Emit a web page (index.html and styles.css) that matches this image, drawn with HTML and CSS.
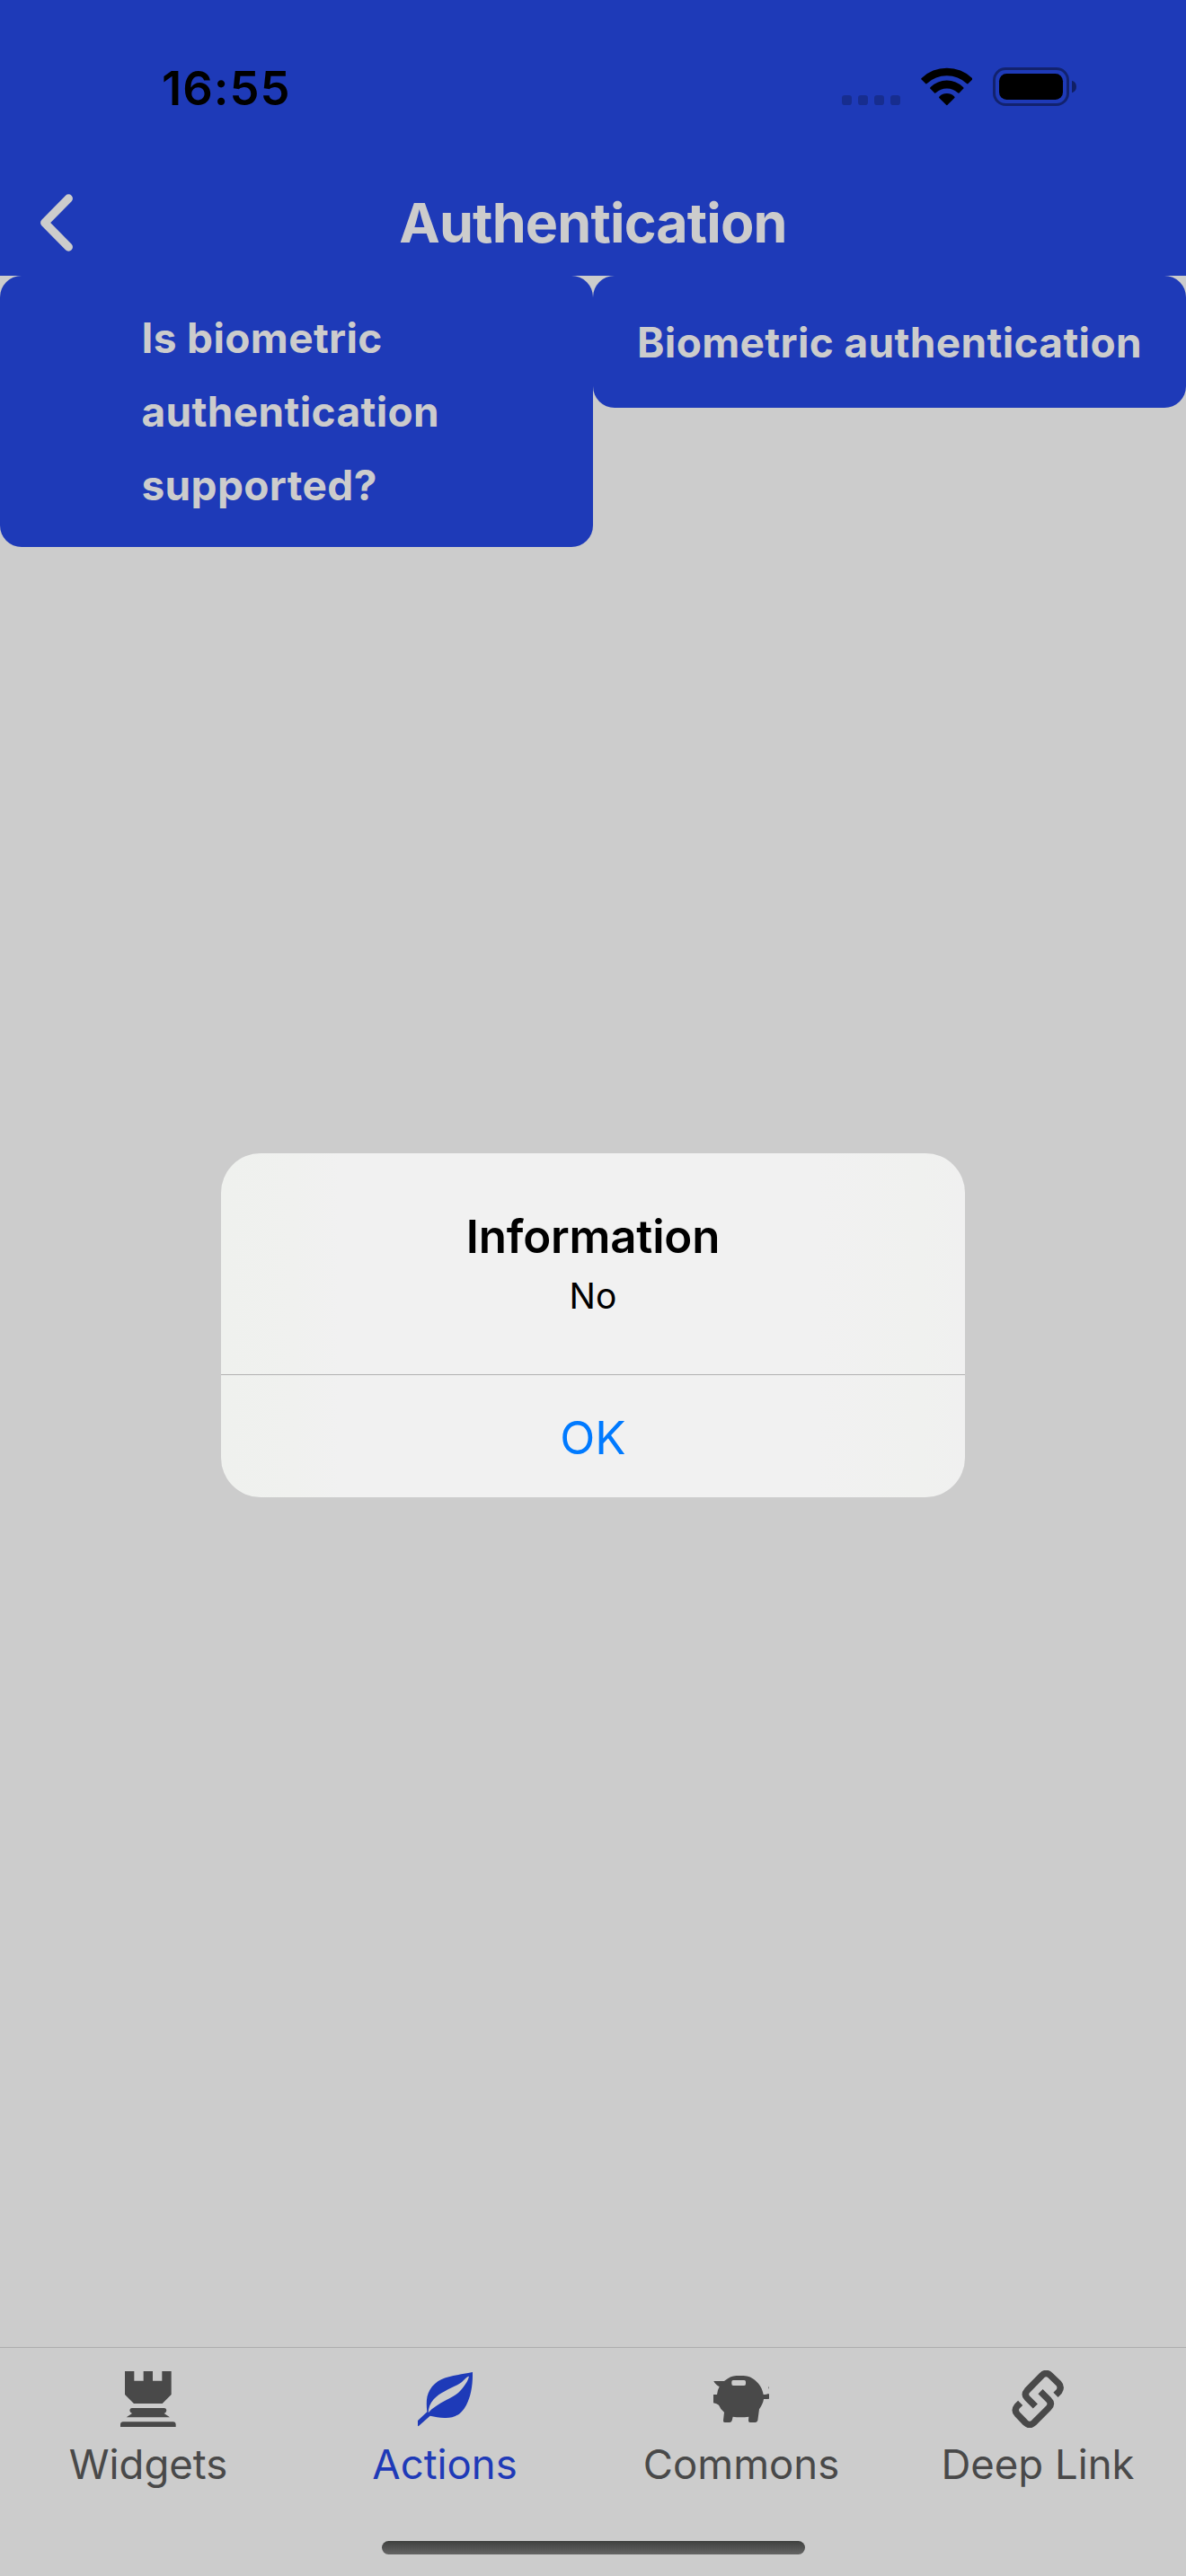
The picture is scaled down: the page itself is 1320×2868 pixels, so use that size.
FILE: index.html
```html
<!DOCTYPE html>
<html lang="en">
<head>
<meta charset="utf-8">
<title>Authentication</title>
<link rel="stylesheet" href="styles.css">
</head>
<body>
<div class="screen">
  <header class="header">
    <div class="status">
      <span class="time">16:55</span>
      <div class="status-icons">
        <svg class="signal" viewBox="111 105 195 129"><rect x="111" y="198" width="33" height="33" rx="10"/><rect x="165" y="198" width="33" height="33" rx="10"/><rect x="219" y="198" width="33" height="33" rx="10"/><rect x="273" y="198" width="33" height="33" rx="10"/></svg>
        <svg class="wifi" viewBox="374 105 173 129"><path d="M375 145Q374 143 376 141A122 122 0 0 1 545 141Q547 143 546 145L531 160Q529 161 527 159A98 98 0 0 0 394 159Q392 161 390 160Z"/><path d="M404 175Q404 173 406 171A78 78 0 0 1 515 171Q517 173 517 175L501 191Q499 192 497 190A53 53 0 0 0 424 190Q422 192 420 191Z"/><path d="M434 206Q434 204 436 202A35 35 0 0 1 485 202Q487 204 487 206L462 231Q460.500 232 459 231Z"/></svg>
        <svg class="battery" viewBox="615 105 279 129"><rect class="case" x="619.500" y="109.500" width="246" height="120" rx="38"/><rect x="636" y="126" width="213" height="87" rx="25"/><path class="tip" d="M879 149Q894 154 894 169.500T879 190Z"/></svg>
      </div>
    </div>
    <div class="nav">
      <svg class="back" viewBox="0 0 36 64"><path d="M31.300 5L4.700 32L31.300 59"/></svg>
      <h1 class="title">Authentication</h1>
    </div>
  </header>
  <main class="content">
    <button class="btn btn-tall"><span class="label-tall">Is biometric authentication supported?</span></button>
    <button class="btn">Biometric authentication</button>
  </main>
  <nav class="tabs">
    <a class="tab"><svg class="icon" viewBox="279 117 192 192"><path d="M297 120H328V152H359V120H390V152H421V120H452V198L422 228H327L297 198Z"/><path d="M320 243H429Q436 244 436 251Q435 258 428 261L447 274H302L321 261Q313 257 313 251Q313 244 320 243Z"/><path d="M282 306V297Q282 290 290 289H459Q467 290 467 297V306Z"/></svg><span>Widgets</span></a>
    <a class="tab active"><svg class="icon" viewBox="279 117 192 192"><path fill-rule="evenodd" d="M468 123C469 166 462 205 447 233C428 270 400 277 374 276C357 276 342 272 326 269L287 304L285 302V285L316 256C313 227 313 203 325 183C352 138 394 138 468 123ZM320 259C334 242 354 231 379 217C405 204 422 194 437 173C446 161 453 150 456 137C446 137 440 154 417 166C387 181 359 192 338 214C326 227 320 244 320 259Z"/></svg><span>Actions</span></a>
    <a class="tab"><svg class="icon" viewBox="279 117 192 192"><path fill-rule="evenodd" d="M283 153H318C333 141 344 135 359 135H376C394 135 406 138 420 149C438 164 446 180 449 198Q459 199 463 196H468V212Q459 214 450 213C448 226 442 237 435 247L430 284Q428 290 423 291H404Q399 291 399 284L400 272Q373 275 347 272L344 285Q342 291 336 291H320Q314 291 315 284L318 257Q306 248 300 233Q294 228 282 226V198H294Q295 184 302 172Q286 162 283 153ZM348 150Q343 150 343 155V162Q343 168 348 168H385Q390 168 390 162V155Q390 150 385 150Z"/><path d="M468 170Q464 174 468 180Z"/></svg><span>Commons</span></a>
    <a class="tab"><svg class="icon link" viewBox="279 117 192 192"><path d="M367 237L340 210Q328 198 340 184L389 134Q403 121 417 134L444 160Q456 173 446 188L435 199"/><path d="M384 188L411 215Q425 229 411 243L362 292Q348 305 334 292L307 264Q295 251 306 237L317 226"/></svg><span>Deep Link</span></a>
  </nav>
  <div class="home"></div>
  <div class="dialog">
    <div class="dialog-body">
      <h2 class="dialog-title">Information</h2>
      <p class="dialog-text">No</p>
    </div>
    <button class="dialog-ok">OK</button>
  </div>
</div>
</body>
</html>
```
FILE: styles.css
```css
* { box-sizing: border-box; margin: 0; padding: 0; }
body { font-family: Inter, "Liberation Sans", sans-serif; background: #ccc; }
button { border: 0; font: inherit; }
svg { display: block; }

.screen { position: relative; width: 1320px; height: 2868px; background: #ccc; display: flex; flex-direction: column; overflow: hidden; }

.header { height: 307px; background: #1e3ab8; }
.status { height: 183px; display: flex; justify-content: space-between; padding: 66px 122px 0 180px; }
.time { font-size: 52.500px; line-height: 64px; font-weight: 600; letter-spacing: 1px; color: #000; }
.status-icons { display: flex; gap: 22.670px; height: 43px; margin-top: 9px; }
.status-icons svg { height: 43px; }
.signal { width: 65px; opacity: .22; }
.wifi { width: 57.660px; }
.battery { width: 93px; }
.case { fill: none; stroke: #000; stroke-width: 9; opacity: .4; }
.tip { opacity: .45; }

.nav { height: 124px; display: grid; grid-template-columns: 160px 1fr 160px; align-items: center; padding-top: 5px; }
.back { width: 36px; height: 64px; margin-left: 45px; fill: none; stroke: #ccc; stroke-width: 9.300; stroke-linecap: round; stroke-linejoin: round; }
.title { text-align: center; font-size: 61px; line-height: 74px; font-weight: 700; letter-spacing: -.85px; color: #ccc; }

.content { flex: 1; display: grid; grid-template-columns: 1fr 1fr; align-items: start; }
.btn { height: 147px; border-radius: 24px; background: #1e3ab8; color: #ccc; font-size: 46px; line-height: 82px; font-weight: 700; letter-spacing: .35px; white-space: nowrap; }
.btn-tall { height: 302px; }
.label-tall { display: block; width: 345px; margin: 0 auto; text-align: left; white-space: normal; }

.tabs { height: 255px; border-top: 1px solid #adadad; display: grid; grid-template-columns: repeat(4, 1fr); }
.tab { display: flex; flex-direction: column; align-items: center; padding-top: 25px; gap: 14px; color: #494949; font-size: 45.500px; line-height: 54px; white-space: nowrap; }
.tab.active { color: #1e3ab8; }
.icon { width: 64px; height: 64px; fill: currentColor; }
.link { fill: none; stroke: currentColor; stroke-width: 22; }

.home { position: absolute; left: 425px; top: 2829px; width: 471px; height: 15px; border-radius: 8px; background: linear-gradient(#3e403e, #656565); }

.dialog { position: absolute; left: 246px; top: 1284px; width: 828px; height: 383px; border-radius: 44px; background: linear-gradient(90deg, #eff1ee, #f0f1ef 10%, #f1f1f1 16%, #f1f1f1 80%, #f0f1ef 94%, #f0f0f0); display: flex; flex-direction: column; overflow: hidden; }
.dialog-body { height: 246px; padding-top: 60px; text-align: center; color: #000; }
.dialog-title { font-size: 51px; line-height: 66px; font-weight: 600; letter-spacing: -.2px; }
.dialog-text { font-size: 39px; line-height: 52px; margin-top: 7px; }
.dialog-ok { flex: 1; padding-top: 3px; border-top: 1px solid #b1b1b1; background: transparent; color: #007aff; font-size: 51px; line-height: 62px; }
```
